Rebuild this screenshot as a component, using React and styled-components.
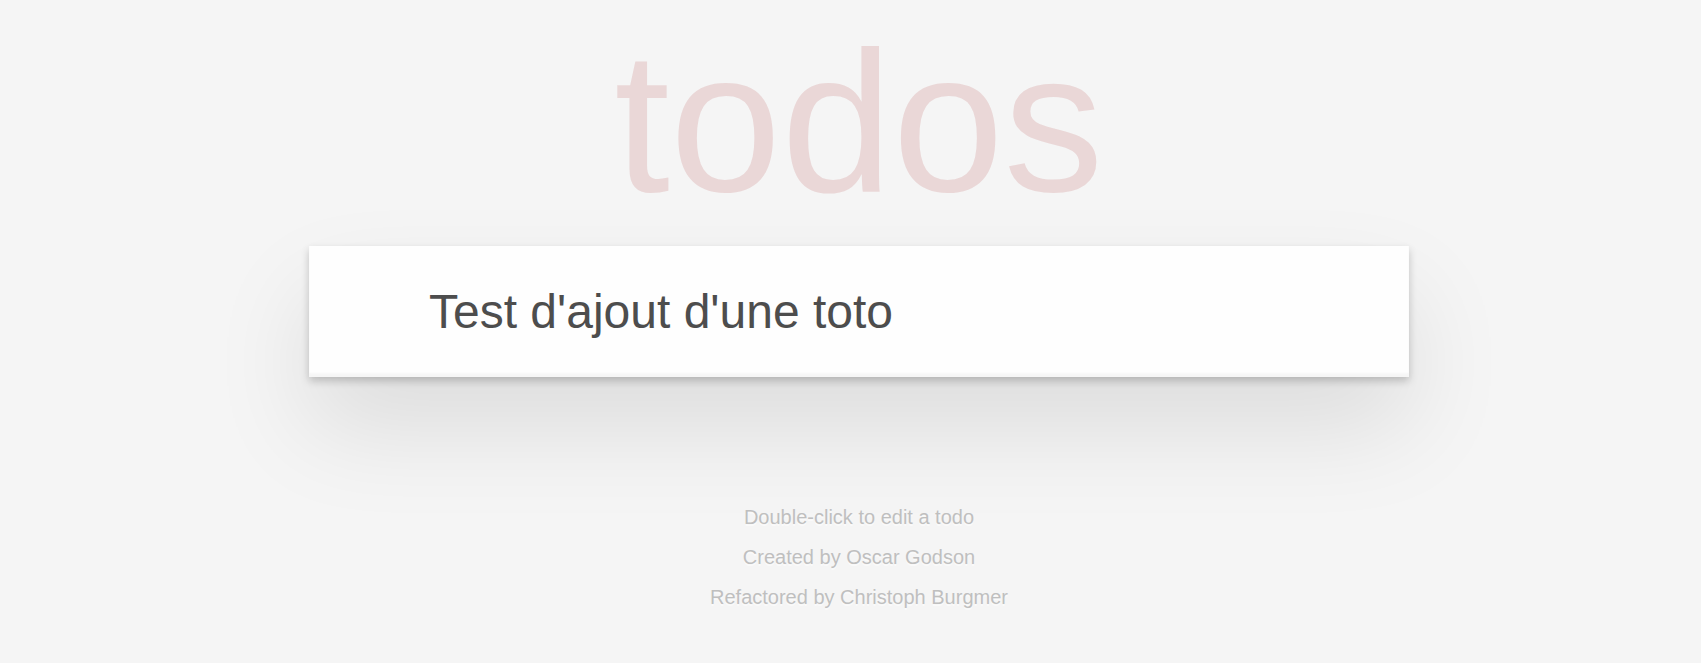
import styled, { createGlobalStyle } from 'styled-components'

const GlobalStyle = createGlobalStyle`
    html, body {
        margin: 0;
        padding: 0;
    }
    body {
        background: #f5f5f5;
        font-family: "Liberation Sans", Arial, sans-serif;
        color: #4d4d4d;
        -webkit-font-smoothing: antialiased;
    }
`

const Page = styled.div`
    padding: 22px 0 0 17px;
`

const Container = styled.div`
    width: 1100px;
    margin: 0 auto;
`

const Title = styled.h1`
    margin: 0 0 24px;
    height: 200px;
    font-size: 200px;
    line-height: 200px;
    font-weight: 100;
    text-align: center;
    color: rgba(175, 47, 47, 0.15);
`

const TodoApp = styled.section`
    background: #fff;
    box-shadow: 0 4px 8px 0 rgba(0, 0, 0, 0.2), 0 50px 100px 0 rgba(0, 0, 0, 0.1);
`

const NewTodo = styled.input`
    display: block;
    box-sizing: border-box;
    width: 100%;
    height: 131px;
    margin: 0;
    padding: 32px 32px 32px 120px;
    border: none;
    outline: none;
    background: rgba(0, 0, 0, 0.003);
    box-shadow: inset 0 -4px 2px rgba(0, 0, 0, 0.03);
    font-family: "Liberation Sans", Arial, sans-serif;
    font-size: 48px;
    line-height: 67.2px;
    color: #4d4d4d;
`

const Info = styled.footer`
    margin: 130px auto 0;
    text-align: center;
    color: #bfbfbf;
    font-size: 20px;
    text-shadow: 0 2px 0 rgba(255, 255, 255, 0.5);

    p {
        line-height: 1;
        margin: 20px 0;
    }
`

export default function App() {
    return (
        <Page>
            <GlobalStyle />
            <Container>
                <Title>todos</Title>
                <TodoApp>
                    <NewTodo defaultValue="Test d'ajout d'une toto" />
                </TodoApp>
                <Info>
                    <p>Double-click to edit a todo</p>
                    <p>Created by Oscar Godson</p>
                    <p>Refactored by Christoph Burgmer</p>
                </Info>
            </Container>
        </Page>
    )
}
